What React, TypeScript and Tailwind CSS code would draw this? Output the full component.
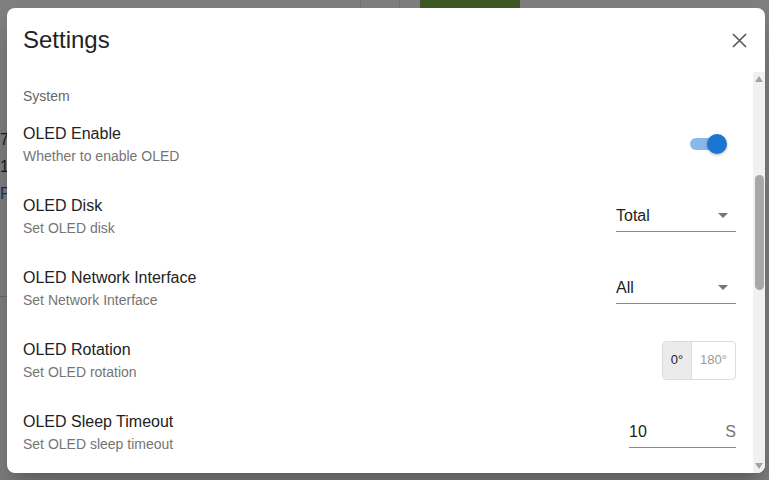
const rows = [
  { title: 'OLED Enable', desc: 'Whether to enable OLED', kind: 'switch' },
  { title: 'OLED Disk', desc: 'Set OLED disk', kind: 'select', value: 'Total' },
  { title: 'OLED Network Interface', desc: 'Set Network Interface', kind: 'select', value: 'All' },
  { title: 'OLED Rotation', desc: 'Set OLED rotation', kind: 'toggle' },
  { title: 'OLED Sleep Timeout', desc: 'Set OLED sleep timeout', kind: 'number' },
];

const Switch = () => (
  <div className="relative mr-[10px] h-[12px] w-[36px] rounded-full bg-[#8ab8ea]">
    <div className="absolute -right-[1px] -top-[4px] h-[20px] w-[20px] rounded-full bg-[#1976d2] shadow-[0_1px_3px_rgba(0,0,0,0.3)]" />
  </div>
);

const Select = ({ value }: { value: string }) => (
  <div className="flex h-[32px] w-[120px] items-center justify-between border-b border-[#8a8a8a] pr-[8px]">
    <span className="text-[16px] text-[#222]">{value}</span>
    <svg width="10" height="5" viewBox="0 0 10 5">
      <path d="M0 0h10L5 5z" fill="#757575" />
    </svg>
  </div>
);

const Toggle = () => (
  <div className="flex h-[39px] overflow-hidden rounded-[4px] border border-[#dcdcdc] text-[13px]">
    <div className="flex w-[28px] items-center justify-center bg-[#ebebeb] text-[#222]">0°</div>
    <div className="flex w-[44px] items-center justify-center border-l border-[#dcdcdc] text-[#9a9a9a]">180°</div>
  </div>
);

const NumberInput = () => (
  <div className="flex h-[32px] w-[107px] items-center justify-between border-b border-[#8a8a8a]">
    <span className="text-[16px] text-[#222]">10</span>
    <span className="text-[16px] text-[#757575]">S</span>
  </div>
);

export default function App() {
  return (
    <div className="relative h-[480px] w-[769px] overflow-hidden bg-[#7f7f7f] font-['Liberation_Sans',Arial,sans-serif]">
      {/* backdrop content */}
      <div className="absolute left-[420px] top-0 h-[8px] w-[100px] bg-[#3f5a24]" />
      <div className="absolute left-[360px] top-0 h-[8px] w-px bg-[#747474]" />
      <div className="absolute left-[399px] top-0 h-[8px] w-px bg-[#747474]" />
      <div className="absolute left-0 top-[296px] h-px w-[8px] bg-[#6a6a6a]" />
      <div className="absolute left-0 top-[130px] text-[16px] leading-[20px] text-[#1a1a1a]">7</div>
      <div className="absolute left-0 top-[157px] text-[16px] leading-[20px] text-[#1a1a1a]">1</div>
      <div className="absolute left-0 top-[184px] text-[16px] leading-[20px] text-[#1b2f5a]">P</div>

      <div className="absolute left-[7px] top-[8px] flex h-[465px] w-[758px] flex-col overflow-hidden rounded-[8px] bg-white shadow-[0_11px_15px_-7px_rgba(0,0,0,0.2),0_24px_38px_3px_rgba(0,0,0,0.14)]">
        <div className="flex h-[64px] shrink-0 items-center justify-between pl-[16px] pr-[18px]">
          <h2 className="text-[24px] text-[#222]">Settings</h2>
          <svg width="15" height="15" viewBox="0 0 15 15">
            <path d="M1 1L14 14M14 1L1 14" stroke="#555" strokeWidth="1.6" />
          </svg>
        </div>
        <div className="flex min-h-0 flex-1">
          <div className="flex-1 overflow-hidden pl-[16px] pr-[17px] pt-[14px]">
            <div className="h-[20px] text-[14px] leading-[20px] text-[#666]">System</div>
            <div className="mt-[6px]">
              {rows.map((r) => (
                <div key={r.title} className="flex h-[72px] items-center justify-between pb-[8px]">
                  <div>
                    <div className="text-[16px] leading-[24px] text-[#222]">{r.title}</div>
                    <div className="text-[14px] leading-[21px] text-[#757575]">{r.desc}</div>
                  </div>
                  {r.kind === 'switch' && <Switch />}
                  {r.kind === 'select' && <Select value={r.value!} />}
                  {r.kind === 'toggle' && <Toggle />}
                  {r.kind === 'number' && <NumberInput />}
                </div>
              ))}
            </div>
          </div>
          <div className="relative w-[12px] shrink-0 bg-[#f1f1f1]">
            <svg className="absolute left-[2px] top-[4px]" width="8" height="6" viewBox="0 0 8 6">
              <path d="M0 6L4 0L8 6z" fill="#a3a3a3" />
            </svg>
            <div className="absolute left-[2px] top-[103px] h-[115px] w-[9px] rounded-full bg-[#a8a8a8]" />
            <svg className="absolute bottom-[4px] left-[2px]" width="8" height="6" viewBox="0 0 8 6">
              <path d="M0 0L8 0L4 6z" fill="#a3a3a3" />
            </svg>
          </div>
        </div>
      </div>
    </div>
  );
}
